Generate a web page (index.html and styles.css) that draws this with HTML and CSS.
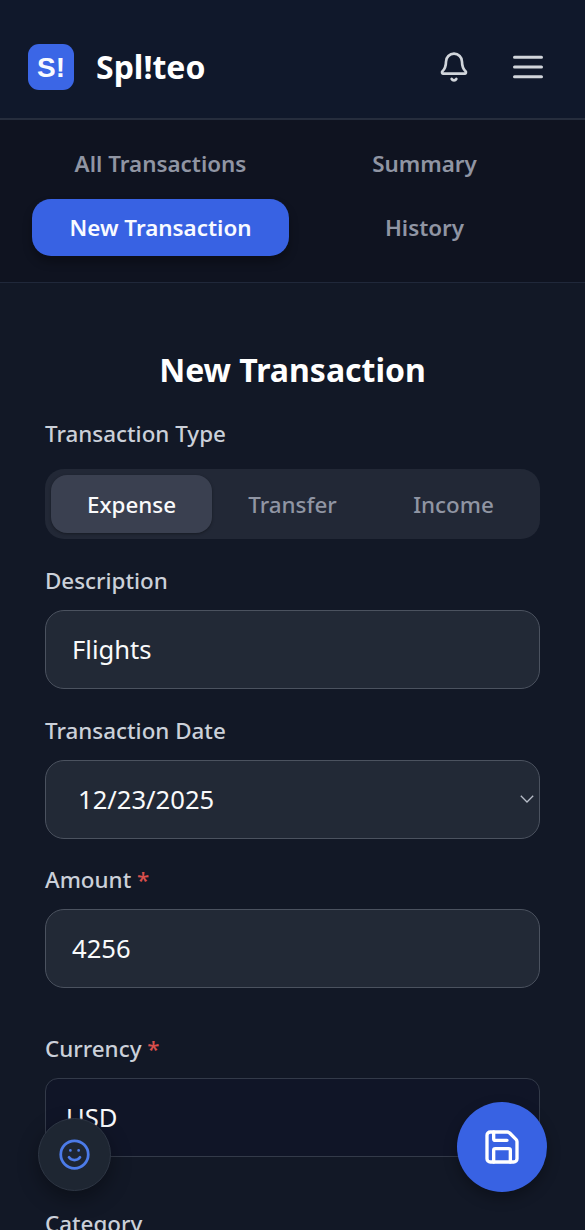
FILE: index.html
```html
<!DOCTYPE html>
<html lang="en">
<head>
<meta charset="utf-8">
<meta name="viewport" content="width=device-width">
<title>Spl!teo</title>
<link rel="stylesheet" href="styles.css">
</head>
<body>
<div class="app">
  <header class="topbar">
    <div class="logo">S!</div>
    <div class="brand">Spl!teo</div>
    <svg class="icon bell" viewBox="0 0 24 24"><path d="M10.268 21a2 2 0 0 0 3.464 0"/><path d="M3.262 15.326A1 1 0 0 0 4 17h16a1 1 0 0 0 .74-1.673C19.41 13.956 18 12.499 18 8A6 6 0 0 0 6 8c0 4.499-1.411 5.956-2.738 7.326"/></svg>
    <svg class="icon menu" viewBox="0 0 30 24"><path d="M1.5 2.3h27M1.5 12h27M1.5 21.7h27"/></svg>
  </header>
  <nav class="tabs">
    <a class="tab">All Transactions</a>
    <a class="tab">Summary</a>
    <a class="tab active">New Transaction</a>
    <a class="tab">History</a>
  </nav>
  <main class="form">
    <h1 class="title">New Transaction</h1>
    <div class="label">Transaction Type</div>
    <div class="segments">
      <div class="segment selected">Expense</div>
      <div class="segment">Transfer</div>
      <div class="segment">Income</div>
    </div>
    <div class="label">Description</div>
    <div class="field">Flights</div>
    <div class="label">Transaction Date</div>
    <div class="field date"><span>12/23/2025</span><svg class="chevron" viewBox="0 0 14 8"><path d="M.8.8 7 7 13.2.8"/></svg></div>
    <div class="label">Amount <span class="required">*</span></div>
    <div class="field amount">4256</div>
    <div class="label">Currency <span class="required">*</span></div>
    <div class="field currency">USD</div>
    <div class="label">Category</div>
  </main>
  <div class="fab feedback"><svg class="icon smile" viewBox="0 0 24 24"><circle cx="12" cy="12" r="10"/><path d="M8 14s1.5 2 4 2 4-2 4-2M9 9h.01M15 9h.01"/></svg></div>
  <div class="fab save"><svg class="icon disk" viewBox="0 0 24 24"><path d="M15.2 3a2 2 0 0 1 1.4.6l3.8 3.8a2 2 0 0 1 .6 1.4V19a2 2 0 0 1-2 2H5a2 2 0 0 1-2-2V5a2 2 0 0 1 2-2z"/><path d="M17 21v-7a1 1 0 0 0-1-1H8a1 1 0 0 0-1 1v7M7 3v4a1 1 0 0 0 1 1h7"/></svg></div>
</div>
</body>
</html>
```
FILE: styles.css
```css
* { box-sizing: border-box; }
body {
  margin: 0;
  background: #121826;
  color: #f9fafb;
  font-family: "Noto Sans", sans-serif;
}
.app { position: relative; height: 1230px; overflow: hidden; }
.icon {
  fill: none;
  stroke: currentColor;
  stroke-width: 2;
  stroke-linecap: round;
  stroke-linejoin: round;
}
.topbar {
  display: flex;
  align-items: center;
  height: 120px;
  padding: 15px 42px 0 28px;
  background: #10182b;
  border-bottom: 2px solid #262d3d;
  color: #d1d5db;
}
.logo {
  width: 46px;
  height: 46px;
  border-radius: 11px;
  background: #3b66e6;
  color: #f8faff;
  font: bold 28px/47px "Liberation Sans", sans-serif;
  text-align: center;
}
.brand {
  flex: 1;
  margin-left: 22px;
  color: #fff;
  font-size: 32px;
  font-weight: 700;
  line-height: 44px;
}
.bell { width: 32px; height: 32px; margin-right: 43px; stroke-width: 2; }
.menu { width: 30px; height: 24px; stroke-width: 3; }
.tabs {
  display: grid;
  grid-template-columns: 1fr 1fr;
  gap: 7px;
  height: 163px;
  padding: 15px 32px 26px;
  background: #0f1320;
  border-bottom: 1px solid #20283a;
}
.tab {
  display: flex;
  align-items: center;
  justify-content: center;
  padding-bottom: 1px;
  border-radius: 19px;
  color: #9095a3;
  font-size: 22.4px;
  font-weight: 600;
}
.tab.active {
  background: #3862e3;
  color: #f8faff;
  box-shadow: 0 6px 10px rgba(0, 0, 0, .3);
}
.form { padding: 64px 45px 0; }
.title {
  margin: 0 0 26px;
  color: #fff;
  font-size: 32px;
  font-weight: 700;
  line-height: 45px;
  text-align: center;
}
.label {
  height: 32px;
  color: #cbd0d9;
  font-size: 22.4px;
  font-weight: 500;
  line-height: 32px;
}
.required { color: #d94f4c; }
.segments {
  display: grid;
  grid-template-columns: repeat(3, 1fr);
  height: 70px;
  margin: 19px 0 26px;
  padding: 6px;
  border-radius: 19px;
  background: #222836;
}
.segment {
  display: flex;
  align-items: center;
  justify-content: center;
  border-radius: 16px;
  color: #9095a3;
  font-size: 22.4px;
  font-weight: 500;
}
.segment.selected {
  background: #3a4050;
  color: #f9fafb;
  box-shadow: 0 1px 3px rgba(0, 0, 0, .35);
}
.field {
  display: flex;
  align-items: center;
  height: 79px;
  margin: 13px 0 26px;
  padding: 0 26px 1px;
  border: 1px solid #4b525f;
  border-radius: 19px;
  background: #222936;
  font-size: 25.6px;
}
.date { justify-content: space-between; margin-bottom: 25px; padding: 0 5px 1px 32px; }
.chevron { width: 14px; height: 8px; fill: none; stroke: #b8bec9; stroke-width: 1.3; }
.amount { margin-bottom: 45px; }
.currency {
  margin-bottom: 51px;
  padding-left: 20px;
  border-color: #333a49;
  border-radius: 13px;
  background: #101527;
}
.fab {
  position: absolute;
  display: flex;
  align-items: center;
  justify-content: center;
  border-radius: 50%;
}
.feedback {
  left: 38px;
  top: 1118px;
  width: 73px;
  height: 73px;
  border: 1px solid #2e3644;
  background: #1e2632;
  color: #4c7be8;
  box-shadow: 0 8px 20px rgba(0, 0, 0, .35);
}
.smile { width: 33px; height: 33px; }
.save {
  left: 457px;
  top: 1102px;
  width: 90px;
  height: 90px;
  background: #3862e3;
  color: #fff;
  box-shadow: 0 6px 14px rgba(0, 0, 0, .3);
}
.disk { width: 40px; height: 40px; }
```
